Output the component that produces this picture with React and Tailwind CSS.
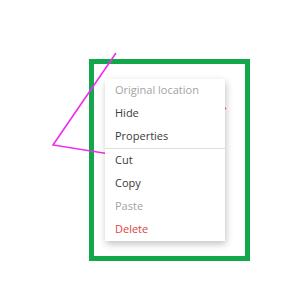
const items = [
  { label: "Original location", tone: "muted" },
  { label: "Hide" },
  { label: "Properties", divider: true },
  { label: "Cut" },
  { label: "Copy" },
  { label: "Paste", tone: "muted" },
  { label: "Delete", tone: "danger" },
];

const toneClass = {
  muted: "text-[#a3a3a3]",
  danger: "text-[#e0443e]",
  default: "text-[#3a3a3a]",
};

export default function App() {
  return (
    <div className="relative w-[300px] h-[285px] bg-white pl-[89px] pt-[59px] font-['Open_Sans',sans-serif]">
      {/* selection frame */}
      <div className="w-[161px] h-[202px] border-[5px] border-[#14a64b] pl-[11px] pt-[15px]">
        <ul className="relative z-10 w-[120px] bg-white shadow-[1px_3px_7px_rgba(0,0,0,0.24)]">
          {items.map((item) => (
            <li key={item.label}>
              <div
                className={`h-[23px] flex items-center pl-[10px] text-[11px] ${
                  toneClass[item.tone || "default"]
                }`}
              >
                {item.label}
              </div>
              {item.divider && <div className="h-px bg-[#dedede]" />}
            </li>
          ))}
        </ul>
      </div>

      {/* drawn shape on the canvas */}
      <svg
        className="absolute left-0 top-0 pointer-events-none"
        width="300"
        height="285"
        viewBox="0 0 300 285"
      >
        <polyline
          points="116,53 53,145 160,162 226,108"
          fill="none"
          stroke="#f02cf0"
          strokeWidth="1.6"
        />
      </svg>
    </div>
  );
}
